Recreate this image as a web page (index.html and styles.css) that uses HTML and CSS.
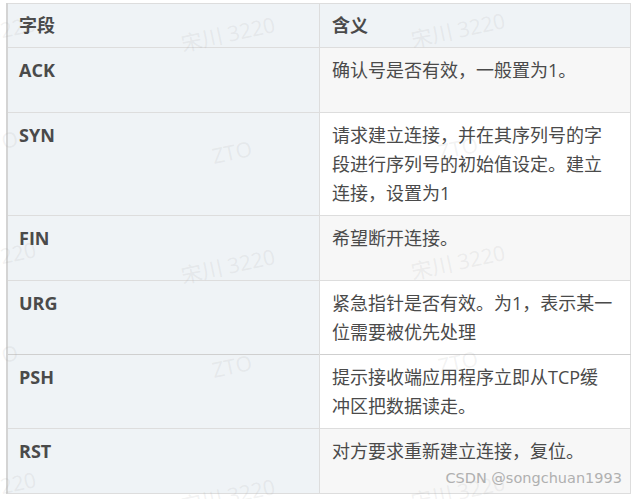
FILE: index.html
```html
<!DOCTYPE html>
<html lang="zh-CN">
<head>
<meta charset="utf-8">
<link rel="stylesheet" href="styles.css">
</head>
<body>
<div class="wrap">
  <table class="flags">
    <thead>
      <tr><th class="c1">字段</th><th class="c2">含义</th></tr>
    </thead>
    <tbody>
      <tr class="odd"><td class="c1">ACK</td><td class="c2">确认号是否有效，一般置为1。</td></tr>
      <tr class="even"><td class="c1">SYN</td><td class="c2">请求建立连接，并在其序列号的字段进行序列号的初始值设定。建立连接，设置为1</td></tr>
      <tr class="odd"><td class="c1">FIN</td><td class="c2">希望断开连接。</td></tr>
      <tr class="even"><td class="c1">URG</td><td class="c2">紧急指针是否有效。为1，表示某一位需要被优先处理</td></tr>
      <tr class="even split"><td class="c1">PSH</td><td class="c2">提示接收端应用程序立即从TCP缓冲区把数据读走。</td></tr>
      <tr class="odd"><td class="c1">RST</td><td class="c2">对方要求重新建立连接，复位。</td></tr>
    </tbody>
  </table>
  <div class="wm w1">宋川 3220</div>
  <div class="wm w2">宋川 3220</div>
  <div class="wm w3">3220</div>
  <div class="wm w4">ZTO</div>
  <div class="wm w5">ZTO</div>
  <div class="wm w6">ZTO</div>
  <div class="wm w7">3220</div>
  <div class="wm w8">宋川 3220</div>
  <div class="wm w9">宋川 3220</div>
  <div class="wm w10">ZTO</div>
  <div class="wm w11">ZTO</div>
  <div class="wm w12">ZTO</div>
  <div class="wm w13">3220</div>
  <div class="wm w14">宋川 3220</div>
  <div class="wm w15">宋川 3220</div>
  <div class="credit">CSDN @songchuan1993</div>
</div>
</body>
</html>
```

FILE: styles.css
```css
html, body {
  margin: 0;
  padding: 0;
  background: #ffffff;
}
.wrap {
  position: relative;
  width: 637px;
  height: 499px;
  overflow: hidden;
  padding: 3px 0 0 6px;
  box-sizing: border-box;
}
.flags {
  border-collapse: collapse;
  width: 625px;
  table-layout: fixed;
  font-family: "Open Sans", "Noto Sans CJK SC", sans-serif;
  font-size: 18px;
  color: #4a4a4a;
  border: 1px solid #dddddd;
  border-left: 2px solid #d4d4d4;
}
.flags th, .flags td {
  border-top: 1px solid #dddddd;
  border-left: 1px solid #dddddd;
  text-align: left;
  vertical-align: top;
  padding: 8px 12px 7px 12px;
}
.flags th {
  line-height: 27px;
  padding-bottom: 8px;
  font-weight: bold;
  background: #eff3f6;
}
.flags .c1 {
  width: 288px;
  padding-left: 11px;
}
.flags .c2 {
  padding-right: 16px;
}
.flags td {
  line-height: 29px;
  height: 49px;
}
.flags td.c1 {
  font-weight: bold;
  background: #eff3f6;
}
.flags tr.odd td.c2 {
  background: #f7f7f7;
}
.flags tr.even td.c2 {
  background: #ffffff;
}
.flags tr.split td {
  border-top: 1px solid #cfcfcf;
}
.wm {
  position: absolute;
  font-family: "Open Sans", "Noto Sans CJK SC", sans-serif;
  font-size: 21px;
  color: rgba(160, 160, 160, 0.14);
  transform: rotate(-12deg);
  white-space: nowrap;
  pointer-events: none;
}
.w1 { left: 180px; top: 18px; }
.w2 { left: 410px; top: 14px; }
.w3 { left: -12px; top: 14px; }
.w4 { left: -22px; top: 128px; }
.w5 { left: 212px; top: 138px; }
.w6 { left: 438px; top: 134px; }
.w7 { left: -12px; top: 240px; }
.w8 { left: 180px; top: 250px; }
.w9 { left: 410px; top: 246px; }
.w10 { left: -22px; top: 342px; }
.w11 { left: 212px; top: 352px; }
.w12 { left: 438px; top: 348px; }
.w13 { left: -12px; top: 470px; }
.w14 { left: 180px; top: 480px; }
.w15 { left: 410px; top: 476px; }
.credit {
  position: absolute;
  right: 15px;
  top: 470px;
  font-family: "DejaVu Sans", sans-serif;
  font-size: 14.5px;
  color: #b0b0b0;
}
```
